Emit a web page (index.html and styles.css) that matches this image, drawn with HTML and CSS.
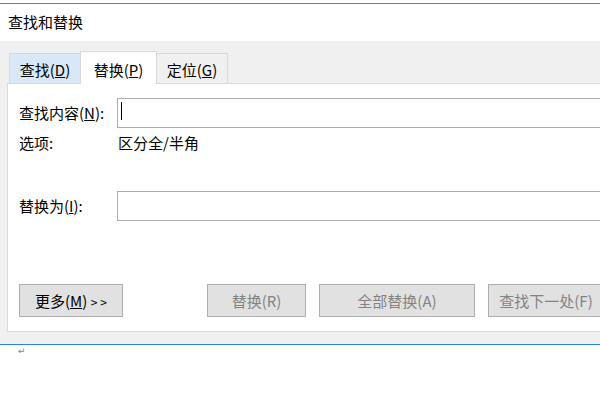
FILE: index.html
```html
<!DOCTYPE html>
<html lang="zh-CN">
<head>
<meta charset="utf-8">
<title>查找和替换</title>
<link rel="stylesheet" href="styles.css">
</head>
<body>
<div class="page">
  <div class="title">查找和替换</div>
  <div class="dialog">
    <div class="tabs">
      <div class="tab tab-hover">查找(<u>D</u>)</div>
      <div class="tab tab-active">替换(<u>P</u>)</div>
      <div class="tab tab-last">定位(<u>G</u>)</div>
    </div>
    <div class="panel">
      <div class="row row-find">
        <div class="label">查找内容(<u>N</u>):</div>
        <div class="input"><span class="caret"></span></div>
      </div>
      <div class="row row-opt">
        <div class="label">选项:</div>
        <div class="value">区分全/半角</div>
      </div>
      <div class="row row-repl">
        <div class="label">替换为(<u>I</u>):</div>
        <div class="input"></div>
      </div>
      <div class="buttons">
        <div class="btn btn-more">更多(<u>M</u>) <span class="chev">&gt;&gt;</span></div>
        <div class="btn btn-dis btn-repl">替换(R)</div>
        <div class="btn btn-dis btn-all">全部替换(A)</div>
        <div class="btn btn-dis btn-next">查找下一处(F)</div>
      </div>
    </div>
  </div>
  <div class="doc"><span class="mark">↵</span></div>
</div>
</body>
</html>
```

FILE: styles.css
```css
html, body {
  margin: 0;
  padding: 0;
  background: #ffffff;
  overflow: hidden;
}
body {
  width: 600px;
  height: 400px;
  font-family: "Noto Sans CJK SC", "Noto Sans", sans-serif;
  font-size: 15px;
  color: #000000;
}
.page {
  margin-top: 3px;
  border-top: 1px solid #3d85c6;
  width: 600px;
}
.title {
  height: 37px;
  line-height: 35px;
  padding-left: 8px;
  white-space: nowrap;
}
.dialog {
  background: #f0f0f0;
  padding: 10px 0 12px 7px;
  border-bottom: 1px solid #2a84d6;
  overflow: hidden;
}
.tabs {
  display: flex;
  align-items: flex-end;
  margin-left: 2px;
  height: 32px;
}
.tab {
  box-sizing: border-box;
  height: 30px;
  border-top: 1px solid #d9d9d9;
  border-left: 1px solid #d9d9d9;
  padding-top: 2px;
  line-height: 27px;
  text-align: center;
  white-space: nowrap;
}
.tab-hover {
  width: 71px;
  background: #d9e8f7;
}
.tab-active {
  width: 77px;
  height: 33px;
  margin-bottom: -1px;
  padding-top: 4px;
  background: #ffffff;
  border-right: 1px solid #d9d9d9;
  position: relative;
  z-index: 1;
}
.tab-last {
  width: 71px;
  border-left: none;
  border-right: 1px solid #d9d9d9;
  background: #f0f0f0;
}
.panel {
  width: 760px;
  box-sizing: border-box;
  height: 249px;
  background: #ffffff;
  border: 1px solid #d9d9d9;
  padding: 14px 0 0 11px;
}
.row {
  display: flex;
  align-items: center;
  height: 30px;
}
.row-repl {
  margin-top: 33px;
}
.label {
  width: 98px;
  flex: none;
  white-space: nowrap;
  line-height: 20px;
}
.value {
  padding-left: 1px;
  line-height: 20px;
  white-space: nowrap;
}
.input {
  flex: 1;
  box-sizing: border-box;
  height: 30px;
  border: 1px solid #ababab;
  background: #ffffff;
  padding: 3px 0 0 3px;
}
.caret {
  display: block;
  width: 1px;
  height: 18px;
  background: #000000;
}
.buttons {
  display: flex;
  margin-top: 63px;
  gap: 13px;
}
.btn {
  box-sizing: border-box;
  height: 33px;
  line-height: 31px;
  border: 1px solid #adadad;
  background: #e1e1e1;
  text-align: center;
  white-space: nowrap;
  flex: none;
}
.btn-more {
  width: 104px;
  margin-right: 71px;
}
.chev {
  font-size: 12px;
  letter-spacing: 3px;
  margin-right: -3px;
}
.btn-dis {
  color: #838383;
}
.btn-repl {
  width: 99px;
}
.btn-all {
  width: 156px;
}
.btn-next {
  width: 116px;
}
.doc {
  height: 60px;
  padding-left: 18px;
}
.mark {
  display: block;
  font-family: "DejaVu Sans", sans-serif;
  font-size: 9px;
  line-height: 10px;
  color: #808080;
  padding-top: 1px;
}
```
